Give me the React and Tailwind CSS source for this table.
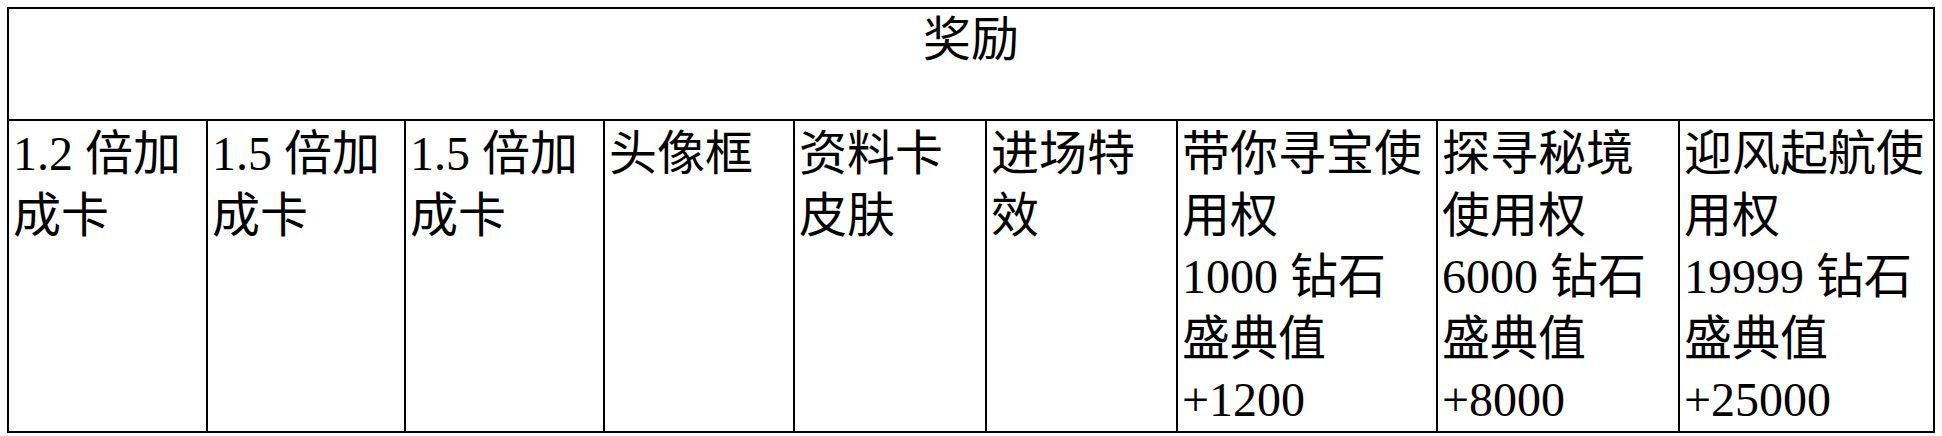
const rewards = [
  '1.2 倍加成卡',
  '1.5 倍加成卡',
  '1.5 倍加成卡',
  '头像框',
  '资料卡皮肤',
  '进场特效',
  '带你寻宝使用权 1000 钻石 盛典值 +1200',
  '探寻秘境使用权 6000 钻石 盛典值 +8000',
  '迎风起航使用权 19999 钻石 盛典值 +25000',
];

// hand-measured column widths so the wraps land where the screenshot has them
const widths = [199, 198, 199, 190, 192, 191, 260, 242, 255];

const lines = {
  6: ['带你寻宝使', '用权', '1000 钻石', '盛典值', '+1200'],
  7: ['探寻秘境', '使用权', '6000 钻石', '盛典值', '+8000'],
  8: ['迎风起航使', '用权', '19999 钻石', '盛典值', '+25000'],
};

const App = () => {
  return (
    <div
      className="bg-white text-black pt-[7px] pl-[7px] min-h-[436px]"
      style={{ fontFamily: '"Liberation Serif", "Noto Sans CJK SC", serif' }}
    >
      <table className="table-fixed border-collapse border-2 border-black w-[1928px] text-[48px] leading-[61.5px]">
        <colgroup>
          {widths.map((w, i) => (
            <col key={i} style={{ width: w }} />
          ))}
        </colgroup>
        <thead>
          <tr>
            <th
              colSpan={9}
              className="border-2 border-black h-[112px] align-top text-center font-normal pt-0"
            >
              奖励
            </th>
          </tr>
        </thead>
        <tbody>
          <tr>
            {rewards.map((r, i) => (
              <td
                key={i}
                className="border-2 border-black align-top text-left pl-[4px] pr-0 pt-[2px] pb-0"
              >
                {lines[i]
                  ? lines[i].map((l, j) => <div key={j}>{l}</div>)
                  : r}
              </td>
            ))}
          </tr>
        </tbody>
      </table>
    </div>
  );
};

export default App;
